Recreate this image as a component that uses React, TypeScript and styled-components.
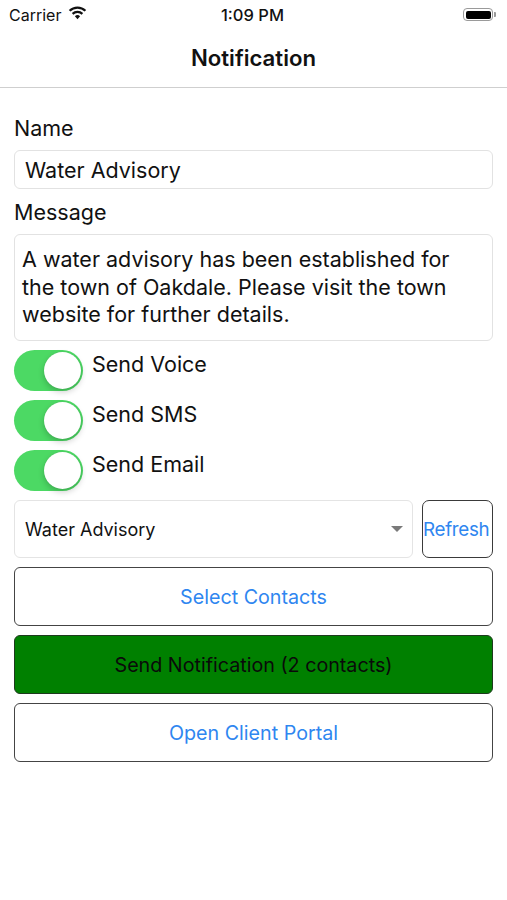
import React from 'react';
import styled, { createGlobalStyle } from 'styled-components';

const GlobalStyle = createGlobalStyle`
  html, body {
    margin: 0;
    padding: 0;
    background: #ffffff;
  }
  body {
    font-family: Inter, "Liberation Sans", Arial, sans-serif;
    color: #111111;
  }
`;

const toggles = ['Send Voice', 'Send SMS', 'Send Email'];

const actions = [
  { label: 'Select Contacts', primary: false },
  { label: 'Send Notification (2 contacts)', primary: true },
  { label: 'Open Client Portal', primary: false },
];

const App = () => {
  return (
    <>
      <GlobalStyle />
      <Screen>
        <StatusBar>
          <Carrier>
            Carrier
            <svg width="19" height="14" viewBox="0 0 19 14">
              <path d="M9.5 13.2 L12.1 10.2 A3.8 3.8 0 0 0 6.9 10.2 Z" fill="#111" />
              <path
                d="M4.6 7.9 A7 7 0 0 1 14.4 7.9"
                stroke="#111"
                strokeWidth="2.2"
                fill="none"
              />
              <path
                d="M1.6 4.8 A11.2 11.2 0 0 1 17.4 4.8"
                stroke="#111"
                strokeWidth="2.2"
                fill="none"
              />
            </svg>
          </Carrier>
          <Clock>1:09 PM</Clock>
          <Battery>
            <BatteryBody>
              <BatteryFill />
            </BatteryBody>
            <BatteryNub />
          </Battery>
        </StatusBar>
        <NavBar>
          <NavTitle>Notification</NavTitle>
        </NavBar>
        <Form>
          <Label>Name</Label>
          <TextField>Water Advisory</TextField>
          <Label>Message</Label>
          <TextArea>
            A water advisory has been established for the town of Oakdale.
            Please visit the town website for further details.
          </TextArea>
          <ToggleList>
            {toggles.map((t) => (
              <ToggleRow key={t}>
                <Switch>
                  <Thumb />
                </Switch>
                <ToggleLabel>{t}</ToggleLabel>
              </ToggleRow>
            ))}
          </ToggleList>
          <PickerRow>
            <Picker>
              <PickerText>Water Advisory</PickerText>
              <Caret />
            </Picker>
            <RefreshButton>Refresh</RefreshButton>
          </PickerRow>
          <Actions>
            {actions.map((a) => (
              <ActionButton key={a.label} $primary={a.primary}>
                {a.label}
              </ActionButton>
            ))}
          </Actions>
        </Form>
      </Screen>
    </>
  );
};

const Screen = styled.div`
  width: 507px;
  height: 900px;
  background: #ffffff;
  overflow: hidden;
`;

const StatusBar = styled.div`
  height: 27px;
  padding: 0 11px 0 9px;
  display: grid;
  grid-template-columns: 1fr auto 1fr;
  align-items: center;
  font-size: 16px;
  color: #111;
`;

const Carrier = styled.div`
  display: flex;
  align-items: center;
  gap: 7px;
  padding-top: 2px;

  svg {
    margin-top: -3px;
  }
`;

const Clock = styled.div`
  font-size: 16.5px;
  font-weight: 500;
  padding-top: 2px;
`;

const Battery = styled.div`
  justify-self: end;
  display: flex;
  align-items: center;
  padding-top: 2px;
`;

const BatteryBody = styled.div`
  width: 30px;
  height: 13px;
  border: 1.5px solid #9a9a9a;
  border-radius: 4px;
  padding: 1.5px;
  box-sizing: border-box;
  display: flex;
`;

const BatteryFill = styled.div`
  flex: 1;
  background: #000;
  border-radius: 2px;
`;

const BatteryNub = styled.div`
  width: 2px;
  height: 5px;
  margin-left: 1px;
  background: #9a9a9a;
  border-radius: 0 1px 1px 0;
`;

const NavBar = styled.div`
  height: 60px;
  border-bottom: 1px solid #cfcfcf;
  display: flex;
  align-items: center;
  justify-content: center;
`;

const NavTitle = styled.div`
  font-size: 22.2px;
  font-weight: 600;
  color: #111;
`;

const Form = styled.div`
  padding: 28px 14px 0;
  display: flex;
  flex-direction: column;
`;

const Label = styled.div`
  font-size: 21.5px;
  line-height: 24px;
  margin-bottom: 10px;
`;

const TextField = styled.div`
  height: 39px;
  box-sizing: border-box;
  border: 1px solid #e2e2e2;
  border-radius: 6px;
  padding: 0 10px;
  display: flex;
  align-items: center;
  font-size: 21.5px;
  margin-bottom: 11px;
`;

const TextArea = styled.div`
  height: 107px;
  box-sizing: border-box;
  border: 1px solid #e2e2e2;
  border-radius: 6px;
  padding: 11px 30px 0 7px;
  font-size: 21.5px;
  line-height: 27.5px;
  margin-bottom: 9px;
`;

const ToggleList = styled.div`
  display: flex;
  flex-direction: column;
  gap: 9px;
  margin-bottom: 9px;
`;

const ToggleRow = styled.div`
  display: flex;
  align-items: flex-start;
  gap: 9px;
`;

const Switch = styled.div`
  width: 69px;
  height: 41px;
  border-radius: 21px;
  background: #4cd964;
  display: flex;
  align-items: center;
  justify-content: flex-end;
  padding: 2px;
  box-sizing: border-box;
`;

const Thumb = styled.div`
  width: 37px;
  height: 37px;
  border-radius: 50%;
  background: #fff;
  box-shadow: 0 3px 6px rgba(0, 0, 0, 0.2), 0 0 1px rgba(0, 0, 0, 0.15);
`;

const ToggleLabel = styled.div`
  font-size: 21.5px;
  line-height: 24px;
  padding-top: 2px;
`;

const PickerRow = styled.div`
  display: flex;
  gap: 9px;
  height: 58px;
  margin-bottom: 9px;
`;

const Picker = styled.div`
  flex: 1;
  box-sizing: border-box;
  border: 1px solid #e4e4e4;
  border-radius: 6px;
  padding: 0 9px 0 10px;
  display: flex;
  align-items: center;
  justify-content: space-between;
`;

const PickerText = styled.div`
  font-size: 18px;
`;

const Caret = styled.div`
  width: 0;
  height: 0;
  border-left: 6.5px solid transparent;
  border-right: 6.5px solid transparent;
  border-top: 6px solid #7a7a7a;
`;

const RefreshButton = styled.div`
  width: 71px;
  box-sizing: border-box;
  border: 1.5px solid #3a3a3a;
  border-radius: 7px;
  white-space: nowrap;
  display: flex;
  align-items: center;
  justify-content: flex-start;
  color: #2f86f0;
  font-size: 18.8px;
  letter-spacing: -0.3px;
`;

const Actions = styled.div`
  display: flex;
  flex-direction: column;
  gap: 9px;
`;

const ActionButton = styled.div<{ $primary: boolean }>`
  height: 59px;
  box-sizing: border-box;
  border: 1.5px solid ${(p) => (p.$primary ? '#1e3a1e' : '#444444')};
  border-radius: 6px;
  background: ${(p) => (p.$primary ? '#008000' : '#ffffff')};
  color: ${(p) => (p.$primary ? '#0a0a0a' : '#2f86f0')};
  font-size: 19.7px;
  display: flex;
  align-items: center;
  justify-content: center;
  padding-top: 1px;
`;

export default App;
